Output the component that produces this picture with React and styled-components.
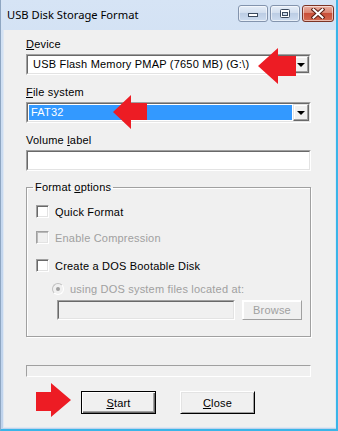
import React from 'react';
import styled, { createGlobalStyle } from 'styled-components';

const GlobalStyle = createGlobalStyle`
  html, body {
    margin: 0;
    padding: 0;
    background: #3ab5e8;
  }
  * {
    box-sizing: border-box;
  }
`;

const UI_FONT = `"Liberation Sans", Arial, sans-serif`;

const Window = styled.div`
  position: relative;
  width: 338px;
  height: 431px;
  display: flex;
  flex-direction: column;
  background: linear-gradient(#d6e4f5, #c3d6ee 60%, #bfd3ec);
  border-left: 1px solid #8ea6c2;
  border-right: 2px solid #3ab5e8;
  border-bottom: 2px solid #3ab5e8;
  overflow: hidden;
`;

const TitleBar = styled.div`
  height: 30px;
  display: flex;
  align-items: flex-start;
  justify-content: space-between;
  padding: 0 2px 0 6px;
`;

const Title = styled.div`
  font-family: "Noto Sans", "Open Sans", sans-serif;
  font-size: 11.2px;
  line-height: 30px;
  color: #000;
`;

const CaptionButtons = styled.div`
  display: flex;
  gap: 2px;
  margin-top: 5px;
`;

const CaptionButton = styled.div`
  width: ${p => (p.$close ? '32px' : '30px')};
  height: 17px;
  border: 1px solid ${p => (p.$close ? '#7b3426' : '#8394ad')};
  border-radius: 3px;
  display: flex;
  align-items: center;
  justify-content: center;
  box-shadow: inset 0 0 0 1px rgba(255, 255, 255, 0.55);
  background: ${p => (p.$close
    ? 'linear-gradient(#eab0a2, #db8672 45%, #c94f38 50%, #d36a50)'
    : 'linear-gradient(#e6eef8, #d2deee 45%, #bccde4 50%, #cddcef)')};
`;

const Client = styled.div`
  flex: 1;
  margin: 0 0 1px 2px;
  background: #f0f0f0;
  border: 1px solid #dfe8f3;
  border-top: none;
  padding: 7px 24px 0 22px;
  display: flex;
  flex-direction: column;
  font-family: ${UI_FONT};
  font-size: 11px;
  letter-spacing: 0.2px;
  color: #000;
`;

const Label = styled.div`
  line-height: 14px;
  height: 14px;
  margin-top: ${p => p.$gap || 0}px;
  margin-bottom: 3px;
  white-space: nowrap;
`;

const Sunken = styled.div`
  height: 21px;
  border-top: 1px solid #a0a0a0;
  border-left: 1px solid #a0a0a0;
  border-right: 1px solid #fff;
  border-bottom: 1px solid #fff;
`;

const SunkenInner = styled.div`
  height: 100%;
  border-top: 1px solid #696969;
  border-left: 1px solid #696969;
  border-right: 1px solid #e3e3e3;
  border-bottom: 1px solid #e3e3e3;
  background: ${p => (p.$disabled ? '#f0f0f0' : '#fff')};
  display: flex;
  align-items: stretch;
`;

const ComboText = styled.div`
  flex: 1;
  margin: 1px;
  padding-left: ${p => (p.$selected ? '2px' : '4px')};
  line-height: 15px;
  white-space: nowrap;
  overflow: hidden;
  background: ${p => (p.$selected ? '#3399ff' : 'transparent')};
  color: ${p => (p.$selected ? '#fff' : '#000')};
`;

const DropButton = styled.div`
  width: 16px;
  border-top: 1px solid #e3e3e3;
  border-left: 1px solid #e3e3e3;
  border-right: 1px solid #696969;
  border-bottom: 1px solid #696969;
  box-shadow: inset -1px -1px 0 #a0a0a0, inset 1px 1px 0 #fff;
  background: #f0f0f0;
  display: flex;
  align-items: center;
  justify-content: center;
`;

const Triangle = styled.div`
  width: 0;
  height: 0;
  border-left: 4px solid transparent;
  border-right: 4px solid transparent;
  border-top: 4px solid #000;
  margin-top: 1px;
`;

const GroupBox = styled.fieldset`
  margin: 9px 0 0 0;
  padding: 11px 7px 16px 9px;
  min-width: 0;
  border: 1px solid #a0a0a0;
  box-shadow: 1px 1px 0 #fff, inset 1px 1px 0 #fff;
  display: flex;
  flex-direction: column;
`;

const Legend = styled.legend`
  padding: 0 2px;
  margin-left: -3px;
  line-height: 14px;
`;

const OptionRow = styled.div`
  display: flex;
  align-items: center;
  height: 13px;
  margin-top: ${p => p.$gap || 0}px;
  margin-left: ${p => p.$indent || 0}px;
  gap: 6px;
  color: ${p => (p.$disabled ? '#a0a0a0' : '#000')};
  white-space: nowrap;
`;

const CheckBox = styled.div`
  width: 13px;
  height: 13px;
  flex: none;
  border-top: 1px solid #a0a0a0;
  border-left: 1px solid #a0a0a0;
  border-right: 1px solid #fff;
  border-bottom: 1px solid #fff;
  box-shadow: inset 1px 1px 0 ${p => (p.$disabled ? '#b9b9b9' : '#696969')},
    inset -1px -1px 0 #e3e3e3;
  background: ${p => (p.$disabled ? '#f0f0f0' : '#fff')};
`;

const RadioDot = styled.div`
  width: 12px;
  height: 12px;
  flex: none;
  border-radius: 50%;
  border: 1px solid #c0c0c0;
  border-bottom-color: #fff;
  border-right-color: #fff;
  background: #f0f0f0;
  display: flex;
  align-items: center;
  justify-content: center;
  &::after {
    content: '';
    width: 4px;
    height: 4px;
    border-radius: 50%;
    background: #a0a0a0;
  }
`;

const PathRow = styled.div`
  display: flex;
  gap: 7px;
  margin-top: 5px;
  margin-left: 21px;
`;

const PathField = styled(Sunken)`
  width: 178px;
  height: 20px;
`;

const PushButton = styled.div`
  width: ${p => p.$width || 75}px;
  height: ${p => p.$height || 23}px;
  display: flex;
  align-items: center;
  justify-content: center;
  background: #f0f0f0;
  color: ${p => (p.$disabled ? '#a0a0a0' : '#000')};
  border-top: 1px solid ${p => (p.$default ? '#000' : '#fff')};
  border-left: 1px solid ${p => (p.$default ? '#000' : '#fff')};
  border-right: 1px solid #000;
  border-bottom: 1px solid #000;
  box-shadow: ${p => (p.$default
    ? 'inset 1px 1px 0 #fff, inset -1px -1px 0 #696969, inset -2px -2px 0 #a0a0a0'
    : 'inset 1px 1px 0 #e3e3e3, inset -1px -1px 0 #a0a0a0')};
  ${p => p.$flat && `
    border-right-color: #a0a0a0;
    border-bottom-color: #a0a0a0;
    box-shadow: inset 1px 1px 0 #fff;
  `}
`;

const Progress = styled.div`
  height: 12px;
  margin-top: 28px;
  border-top: 1px solid #a0a0a0;
  border-left: 1px solid #a0a0a0;
  border-right: 1px solid #fff;
  border-bottom: 1px solid #fff;
  background: #f0f0f0;
`;

const ButtonRow = styled.div`
  display: flex;
  gap: 24px;
  margin-top: 14px;
  padding-left: 55px;
`;

const Arrow = styled.svg`
  position: absolute;
  left: ${p => p.$left}px;
  top: ${p => p.$top}px;
`;

const RED = '#ed1c24';

const LeftArrow = ({ left, top, w, h, head, shaftTop, shaftBottom }) => (
  <Arrow $left={left} $top={top} width={w} height={h} viewBox={`0 0 ${w} ${h}`}>
    <polygon
      fill={RED}
      points={`0,${h / 2} ${head},0 ${head},${shaftTop} ${w},${shaftTop} ${w},${shaftBottom} ${head},${shaftBottom} ${head},${h}`}
    />
  </Arrow>
);

const RightArrow = ({ left, top, w, h, head, shaftTop, shaftBottom }) => (
  <Arrow $left={left} $top={top} width={w} height={h} viewBox={`0 0 ${w} ${h}`}>
    <polygon
      fill={RED}
      points={`0,${shaftTop} ${w - head},${shaftTop} ${w - head},0 ${w},${h / 2} ${w - head},${h} ${w - head},${shaftBottom} 0,${shaftBottom}`}
    />
  </Arrow>
);

const Combo = ({ children, selected }) => (
  <Sunken>
    <SunkenInner>
      <ComboText $selected={selected}>{children}</ComboText>
      <DropButton><Triangle /></DropButton>
    </SunkenInner>
  </Sunken>
);

export default function App() {
  return (
    <>
      <GlobalStyle />
      <Window>
        <TitleBar>
          <Title>USB Disk Storage Format</Title>
          <CaptionButtons>
            <CaptionButton>
              <svg width="12" height="9" viewBox="0 0 12 9">
                <rect x="1.5" y="4.5" width="9" height="3" fill="#fff" stroke="#3b4a5e" />
              </svg>
            </CaptionButton>
            <CaptionButton>
              <svg width="12" height="10" viewBox="0 0 12 10">
                <rect x="1.5" y="0.5" width="9" height="8" rx="1" fill="#fff" stroke="#3b4a5e" />
                <rect x="3.5" y="3.5" width="5" height="3" fill="#cfdcec" stroke="#3b4a5e" />
              </svg>
            </CaptionButton>
            <CaptionButton $close>
              <svg width="14" height="11" viewBox="0 0 14 11">
                <path d="M2.5 1.5 L11.5 9.5 M11.5 1.5 L2.5 9.5" stroke="#5a1f14" strokeWidth="4" strokeLinecap="square" />
                <path d="M2.5 1.5 L11.5 9.5 M11.5 1.5 L2.5 9.5" stroke="#fff" strokeWidth="2" strokeLinecap="square" />
              </svg>
            </CaptionButton>
          </CaptionButtons>
        </TitleBar>

        <Client>
          <Label><u>D</u>evice</Label>
          <Combo>USB Flash Memory PMAP (7650 MB) (G:\)</Combo>

          <Label $gap={10}><u>F</u>ile system</Label>
          <Combo selected>FAT32</Combo>

          <Label $gap={10}>Volume <u>l</u>abel</Label>
          <Sunken>
            <SunkenInner />
          </Sunken>

          <GroupBox>
            <Legend>Format <u>o</u>ptions</Legend>
            <OptionRow>
              <CheckBox />
              <span>Quick Format</span>
            </OptionRow>
            <OptionRow $gap={13} $disabled>
              <CheckBox $disabled />
              <span>Enable Compression</span>
            </OptionRow>
            <OptionRow $gap={15}>
              <CheckBox />
              <span>Create a DOS Bootable Disk</span>
            </OptionRow>
            <OptionRow $gap={10} $indent={16} $disabled>
              <RadioDot />
              <span>using DOS system files located at:</span>
            </OptionRow>
            <PathRow>
              <PathField>
                <SunkenInner $disabled />
              </PathField>
              <PushButton $width={60} $height={20} $disabled $flat>Browse</PushButton>
            </PathRow>
          </GroupBox>

          <Progress />

          <ButtonRow>
            <PushButton $default><span><u>S</u>tart</span></PushButton>
            <PushButton><span><u>C</u>lose</span></PushButton>
          </ButtonRow>
        </Client>

        <LeftArrow left={257} top={48} w={38} h={36} head={20} shaftTop={8} shaftBottom={28} />
        <LeftArrow left={112} top={95} w={34} h={34} head={18} shaftTop={8} shaftBottom={25} />
        <RightArrow left={35} top={383} w={35} h={34} head={20} shaftTop={9} shaftBottom={28} />
      </Window>
    </>
  );
}
